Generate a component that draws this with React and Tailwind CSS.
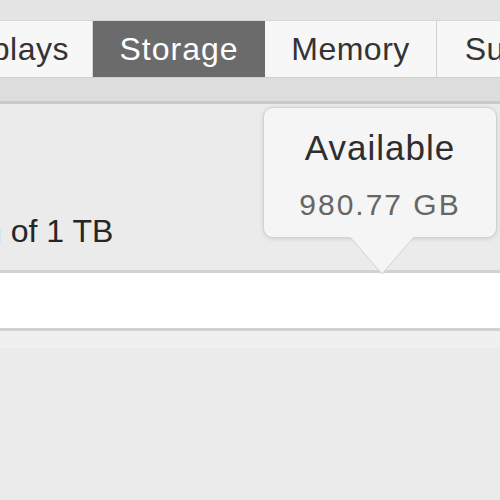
import React from "react";

const tabs = ["Displays", "Storage", "Memory", "Support"];

const App = () => {
  return (
    <div
      className="relative w-[500px] h-[500px] overflow-hidden bg-[#ebebeb]"
      style={{ fontFamily: '"Liberation Sans", Arial, sans-serif' }}
    >
      {/* window top strip */}
      <div className="h-[21px] bg-[#e4e4e4] border-b border-[#d6d6d6]" />

      {/* tab bar */}
      <div className="flex h-[56px] ml-[-79px] bg-[#dcdcdc]">
        {tabs.map((tab) => (
          <div
            key={tab}
            className={
              tab === "Storage"
                ? "w-[172px] shrink-0 flex items-center justify-center bg-[#6b6b6b] text-white text-[32px] leading-none tracking-[1px]"
                : "w-[172px] shrink-0 flex items-center justify-center bg-[#f7f7f7] border-r border-[#d4d4d4] text-[#333333] text-[32px] leading-none tracking-[0.5px]"
            }
          >
            {tab}
          </div>
        ))}
      </div>

      {/* band under tabs */}
      <div className="h-[24px] bg-[#dddddd] border-t border-[#cfcfcf]" />
      <div className="h-[3px] bg-[#c9c9c9]" />

      {/* content */}
      <div className="h-[166px] bg-[#ebebeb] pt-[111px] overflow-hidden">
        <div className="ml-[-16px] text-[32px] leading-none text-[#262626] whitespace-nowrap">
          n of 1 TB
        </div>
      </div>

      {/* storage bar */}
      <div className="h-[61px] bg-white border-t-[3px] border-b-[3px] border-[#d2d2d2]" />
      <div className="h-[17px] bg-[#f0f0f0]" />

      {/* tooltip */}
      <div className="absolute left-[263px] top-[107px] w-[234px]">
        <div className="h-[131px] rounded-[10px] bg-[#f5f5f5] border border-[#d2d2d2] shadow-[0_1px_4px_rgba(0,0,0,0.12)] flex flex-col items-center pt-[22px]">
          <div className="text-[35px] leading-none tracking-[1px] text-[#2e2e2e]">
            Available
          </div>
          <div className="mt-[25px] text-[30px] leading-none tracking-[2px] text-[#666666]">
            980.77 GB
          </div>
        </div>
        <svg
          className="absolute left-[86px] top-[129px]"
          width="66"
          height="40"
          viewBox="0 0 66 40"
        >
          <path d="M1 1 L33 38 L65 1" fill="#f5f5f5" stroke="#d2d2d2" strokeWidth="1" />
          <rect x="2" y="0" width="62" height="2" fill="#f5f5f5" />
        </svg>
      </div>
    </div>
  );
};

export default App;
